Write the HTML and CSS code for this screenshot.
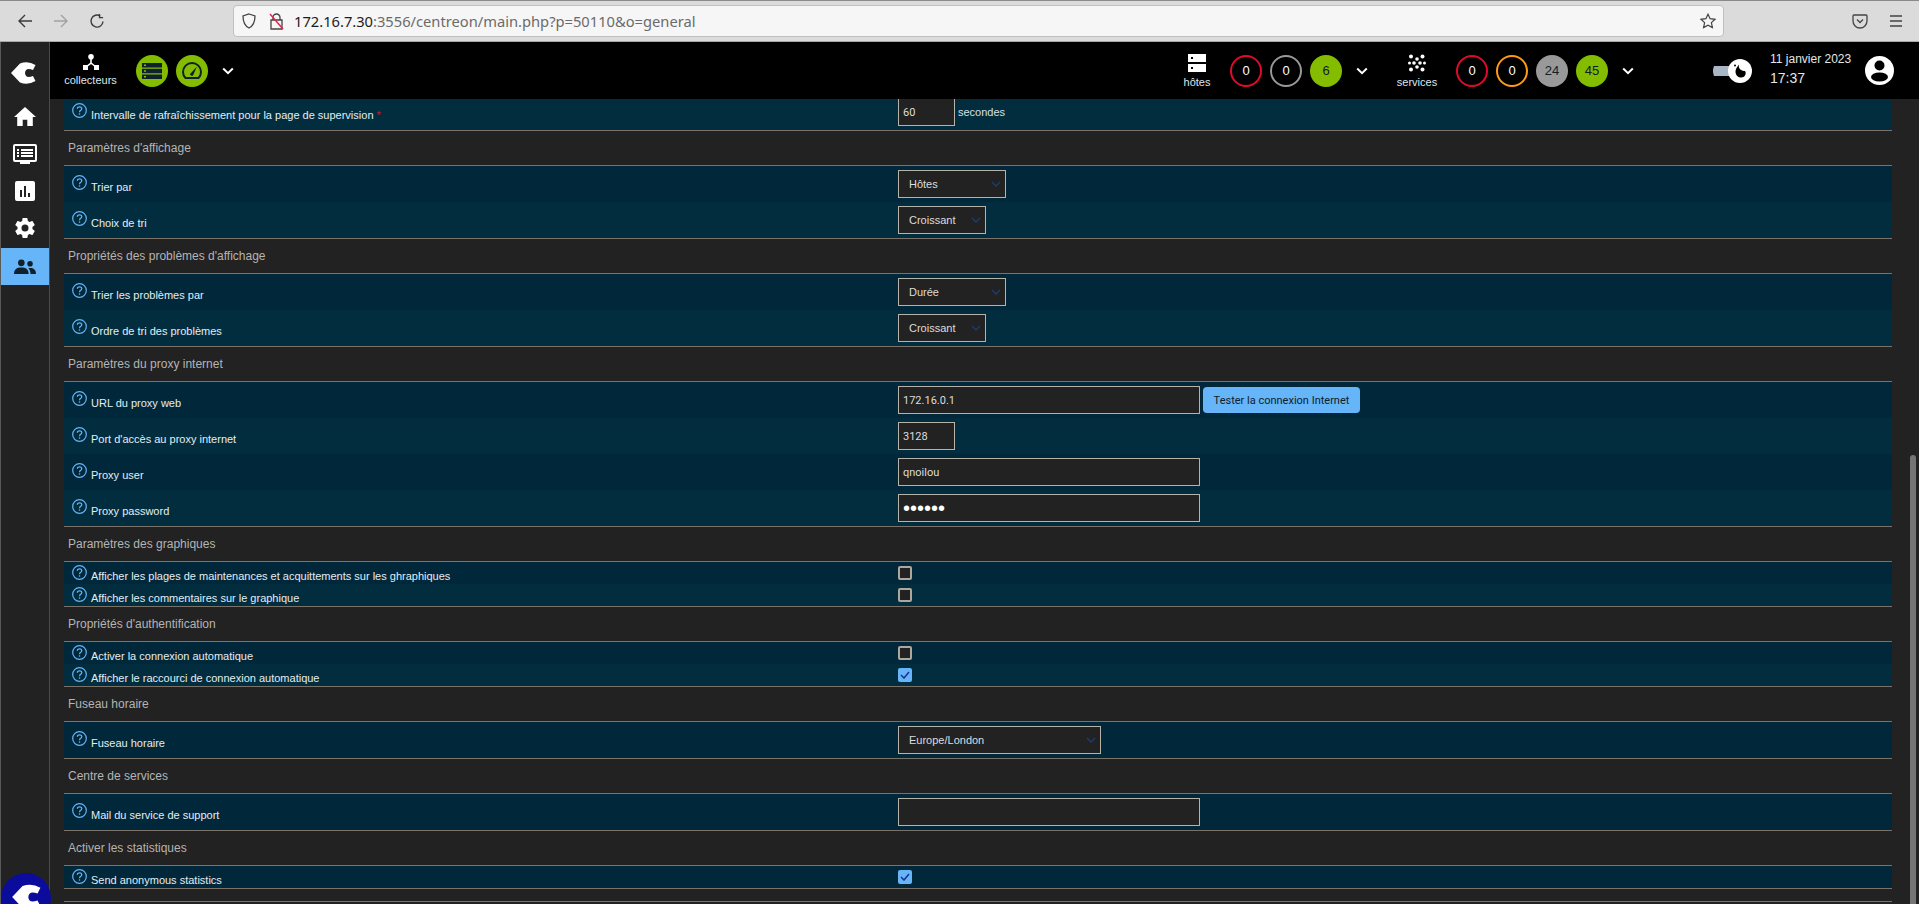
FILE: index.html
```html
<!DOCTYPE html>
<html lang="fr">
<head>
<meta charset="utf-8">
<title>Centreon</title>
<link rel="stylesheet" href="styles.css">
</head>
<body>
<svg class="defs" width="0" height="0" aria-hidden="true">
  <symbol id="logo" viewBox="0 0 26 24"><path d="M1 12 L10 2.500 Q18 -0.500 25.500 4 L23 9 Q15.500 6 15 12 Q15.500 18 23 15 L25.500 20 Q18 24.500 10 21.500 Z"/></symbol>
  <symbol id="help" viewBox="0 0 15 15"><circle cx="7.5" cy="7.5" r="6.8" fill="none" stroke="#66b5f8" stroke-width="1.2"/><path d="M5.3 5.8 C5.3 3.2 9.8 3.2 9.8 5.8 C9.8 7.4 7.5 7.2 7.5 9.2" fill="none" stroke="#66b5f8" stroke-width="1.2"/><circle cx="7.5" cy="11" r=".8" fill="#66b5f8"/></symbol>
  <symbol id="chev" viewBox="0 0 12 8"><path d="M1.2 1.5 L6 6.2 L10.8 1.5" fill="none" stroke="#fff" stroke-width="2"/></symbol>
</svg>
<div class="browser">
  <svg class="tool first" width="16" height="16" viewBox="0 0 16 16"><path d="M15 8H2M8 2L2 8l6 6" fill="none" stroke="#3b3b3b" stroke-width="1.4"/></svg>
  <svg class="tool" width="16" height="16" viewBox="0 0 16 16"><path d="M1 8h13M8 2l6 6-6 6" fill="none" stroke="#a2a2a2" stroke-width="1.4"/></svg>
  <svg class="tool" width="16" height="16" viewBox="0 0 16 16"><path d="M14 8.5A6 6 0 1 1 11.5 3.2M10.5 1v3.6h3.6" fill="none" stroke="#3b3b3b" stroke-width="1.4"/></svg>
  <div class="urlbar">
    <svg width="14" height="16" viewBox="0 0 14 16"><path d="M7 1 L13 3 C13 9 11 13 7 15 C3 13 1 9 1 3 Z" fill="none" stroke="#444" stroke-width="1.3"/></svg>
    <svg class="lock" width="15" height="17" viewBox="0 0 15 17"><path d="M4 7V4.5a3.5 3.5 0 0 1 7 0V7M2 7h11v9H2z" fill="none" stroke="#444" stroke-width="1.3"/><path d="M1 1l13 15" stroke="#e22850" stroke-width="1.5"/></svg>
    <span class="url"><b>172.16.7.30</b>:3556/centreon/main.php?p=50110&amp;o=general</span>
    <svg class="star" width="16" height="16" viewBox="0 0 16 16"><path d="M8 1.2l2.1 4.5 4.9.6-3.6 3.3 1 4.9L8 12.1l-4.4 2.4 1-4.9L1 6.3l4.9-.6z" fill="none" stroke="#444" stroke-width="1.2"/></svg>
  </div>
  <svg class="pocket" width="16" height="16" viewBox="0 0 16 16"><path d="M2 2h12a1 1 0 0 1 1 1v5a7 7 0 0 1-14 0V3a1 1 0 0 1 1-1z" fill="none" stroke="#444" stroke-width="1.3"/><path d="M5 6.5l3 3 3-3" fill="none" stroke="#444" stroke-width="1.3"/></svg>
  <svg class="burger" width="14" height="14" viewBox="0 0 14 14"><path d="M1 2h12M1 7h12M1 12h12" stroke="#444" stroke-width="1.4"/></svg>
</div>
<div class="app">
  <nav class="sidebar">
    <svg class="side-logo" width="26" height="24"><use href="#logo" fill="#fff"/></svg>
    <a class="side-item"><svg width="22" height="19" viewBox="0 0 24 20" preserveAspectRatio="none"><path d="M12 0 L24 10.5 H20.5 V20 H14.5 V13.5 H9.5 V20 H3.5 V10.5 H0 Z" fill="#fff"/></svg></a>
    <a class="side-item"><svg width="24" height="20" viewBox="0 0 24 20"><path fill="#fff" fill-rule="evenodd" d="M2 0h20a2 2 0 0 1 2 2v14a2 2 0 0 1-2 2h-5v2H7v-2H2a2 2 0 0 1-2-2V2a2 2 0 0 1 2-2zm0 2v14h20V2zM4 5h2v2H4zm4 0h12v2H8zM4 8h2v2H4zm4 0h12v2H8zM4 11h2v2H4zm4 0h12v2H8z"/></svg></a>
    <a class="side-item"><svg width="20" height="20" viewBox="0 0 20 20"><path fill="#fff" fill-rule="evenodd" d="M2 0h16a2 2 0 0 1 2 2v16a2 2 0 0 1-2 2H2a2 2 0 0 1-2-2V2a2 2 0 0 1 2-2zm3 9v7h2V9zm4-4v11h2V5zm4 7v4h2v-4z"/></svg></a>
    <a class="side-item"><svg width="24" height="24" viewBox="0 0 24 24"><path fill="#fff" d="M19.4 13c.04-.33.1-.66.1-1s-.06-.67-.1-1l2.1-1.65c.2-.15.25-.42.13-.64l-2-3.46c-.12-.22-.39-.3-.61-.22l-2.49 1c-.52-.4-1.08-.73-1.69-.98l-.38-2.65A.49.49 0 0 0 14 2h-4c-.25 0-.46.18-.49.42l-.38 2.65c-.61.25-1.17.59-1.69.98l-2.49-1c-.23-.09-.49 0-.61.22l-2 3.46c-.13.22-.07.49.12.64L4.56 11c-.04.33-.06.66-.06 1s.02.67.06 1l-2.1 1.65c-.2.15-.25.42-.13.64l2 3.46c.12.22.39.3.61.22l2.49-1c.52.4 1.08.73 1.69.98l.38 2.65c.03.24.24.42.49.42h4c.25 0 .46-.18.49-.42l.38-2.65c.61-.25 1.17-.59 1.69-.98l2.49 1c.23.09.49 0 .61-.22l2-3.46c.12-.22.07-.49-.12-.64zM12 15.5a3.5 3.5 0 1 1 0-7 3.5 3.5 0 0 1 0 7z"/></svg></a>
    <a class="side-item active"><svg width="22" height="15" viewBox="0 0 24 16" preserveAspectRatio="none"><g fill="#10202c"><circle cx="8" cy="4" r="3.6"/><circle cx="17.5" cy="5" r="3"/><path d="M0 16c0-5 3-7 8-7s8 2 8 7zM17.5 9.5c4 0 6.500 2 6.500 6.500h-6c0-3-1-5-2.500-6.200z"/></g></svg></a>
  </nav>
  <div class="main">
    <header class="topbar">
      <div class="block block-coll">
        <svg width="16" height="16" viewBox="0 0 16 16"><g fill="#fff"><circle cx="8" cy="2.800" r="2.800"/><rect x="0" y="11" width="5" height="5"/><rect x="11" y="11" width="5" height="5"/></g><path d="M8 4V9L3 13M8 9l5 4" fill="none" stroke="#fff" stroke-width="1.600"/></svg>
        <span>collecteurs</span>
      </div>
      <span class="round green first-round"><svg width="20" height="16" viewBox="0 0 20 16"><path fill="#10202c" fill-rule="evenodd" d="M0 0h20v4.600H0zM2 1.600v1.400h2V1.600zM0 5.700h20v4.600H0zM2 7.300v1.400h2V7.300zM0 11.400h20V16H0zM2 13v1.400h2V13z"/></svg></span>
      <span class="round green"><svg width="20" height="17" viewBox="0 0 20 17"><path d="M3.500 16H16.500C18 14.500 19 12.500 19 10A9 9 0 0 0 1 10C1 12.500 2 14.500 3.500 16Z" fill="none" stroke="#10202c" stroke-width="2"/><path d="M8 12 L15 4.500 L11 13.500 A2 2 0 0 1 8 12Z" fill="#10202c"/></svg></span>
      <svg class="chev" width="12" height="8"><use href="#chev"/></svg>
      <div class="block block-hosts">
        <svg width="18" height="18" viewBox="0 0 18 18"><path fill="#fff" fill-rule="evenodd" d="M0 0h18v8H0zM3 3v2h2V3zM0 10h18v8H0zM3 13v2h2v-2z"/></svg>
        <span>hôtes</span>
      </div>
      <span class="round red">0</span>
      <span class="round grey">0</span>
      <span class="round green">6</span>
      <svg class="chev" width="12" height="8"><use href="#chev"/></svg>
      <div class="block block-serv">
        <svg width="18" height="18" viewBox="0 0 18 18"><g fill="#fff"><circle cx="3" cy="2.500" r="2"/><circle cx="14.500" cy="2.500" r="2"/><circle cx="9" cy="5" r="1.800"/><circle cx="1.500" cy="9" r="1.500"/><circle cx="6" cy="9" r="1.800"/><circle cx="12" cy="9" r="1.800"/><circle cx="16.500" cy="9" r="1.500"/><circle cx="9" cy="13" r="1.800"/><circle cx="3" cy="15.500" r="2"/><circle cx="14.500" cy="15.500" r="2"/></g></svg>
        <span>services</span>
      </div>
      <span class="round red">0</span>
      <span class="round orange">0</span>
      <span class="round solidgrey">24</span>
      <span class="round green">45</span>
      <svg class="chev" width="12" height="8"><use href="#chev"/></svg>
      <div class="toggle"><span class="knob"><svg width="24" height="24" viewBox="0 0 24 24"><circle cx="12" cy="12" r="12" fill="#fff"/><path d="M11 5.500 C10 9.500 13 12 17 12 C19 15 16.500 19 12.500 18.500 C8.500 18 6 13.500 8.500 9 Z" fill="#000"/><circle cx="7" cy="6.500" r="1" fill="#000"/></svg></span></div>
      <div class="clock"><span class="date">11 janvier 2023</span><span class="time">17:37</span></div>
      <svg class="user" width="29" height="29" viewBox="0 0 29 29"><circle cx="14.500" cy="14.500" r="14.500" fill="#fff"/><circle cx="14.500" cy="9.500" r="5" fill="#000"/><ellipse cx="14.500" cy="21" rx="8.500" ry="4.500" fill="#000"/></svg>
    </header>
    <div class="viewport">
      <form class="form">
        <div class="row alt last"><div class="lab"><svg class="help"><use href="#help"/></svg><span>Intervalle de rafraîchissement pour la page de supervision <i>*</i></span></div><div class="val"><input class="in-s" value="60"><span class="unit">secondes</span></div></div>
        <div class="title">Paramètres d'affichage</div>
        <div class="row"><div class="lab"><svg class="help"><use href="#help"/></svg><span>Trier par</span></div><div class="val"><select class="sel-m"><option>Hôtes</option></select></div></div>
        <div class="row alt last"><div class="lab"><svg class="help"><use href="#help"/></svg><span>Choix de tri</span></div><div class="val"><select class="sel-s"><option>Croissant</option></select></div></div>
        <div class="title">Propriétés des problèmes d'affichage</div>
        <div class="row"><div class="lab"><svg class="help"><use href="#help"/></svg><span>Trier les problèmes par</span></div><div class="val"><select class="sel-m"><option>Durée</option></select></div></div>
        <div class="row alt last"><div class="lab"><svg class="help"><use href="#help"/></svg><span>Ordre de tri des problèmes</span></div><div class="val"><select class="sel-s"><option>Croissant</option></select></div></div>
        <div class="title">Paramètres du proxy internet</div>
        <div class="row"><div class="lab"><svg class="help"><use href="#help"/></svg><span>URL du proxy web</span></div><div class="val"><input class="in-l" value="172.16.0.1"><button type="button" class="btn">Tester la connexion Internet</button></div></div>
        <div class="row alt"><div class="lab"><svg class="help"><use href="#help"/></svg><span>Port d'accès au proxy internet</span></div><div class="val"><input class="in-s" value="3128"></div></div>
        <div class="row"><div class="lab"><svg class="help"><use href="#help"/></svg><span>Proxy user</span></div><div class="val"><input class="in-l" value="qnoilou"></div></div>
        <div class="row alt last"><div class="lab"><svg class="help"><use href="#help"/></svg><span>Proxy password</span></div><div class="val"><input class="in-l pw" type="password" value="secret"></div></div>
        <div class="title">Paramètres des graphiques</div>
        <div class="row slim"><div class="lab"><svg class="help"><use href="#help"/></svg><span>Afficher les plages de maintenances et acquittements sur les ghraphiques</span></div><div class="val"><span class="check"></span></div></div>
        <div class="row slim alt last"><div class="lab"><svg class="help"><use href="#help"/></svg><span>Afficher les commentaires sur le graphique</span></div><div class="val"><span class="check"></span></div></div>
        <div class="title">Propriétés d'authentification</div>
        <div class="row slim"><div class="lab"><svg class="help"><use href="#help"/></svg><span>Activer la connexion automatique</span></div><div class="val"><span class="check"></span></div></div>
        <div class="row slim alt last"><div class="lab"><svg class="help"><use href="#help"/></svg><span>Afficher le raccourci de connexion automatique</span></div><div class="val"><span class="check on"><svg width="10" height="8" viewBox="0 0 10 8"><path d="M1 4l3 3 5-6" fill="none" stroke="#1c2f8f" stroke-width="1.500"/></svg></span></div></div>
        <div class="title">Fuseau horaire</div>
        <div class="row last"><div class="lab"><svg class="help"><use href="#help"/></svg><span>Fuseau horaire</span></div><div class="val"><select class="sel-l"><option>Europe/London</option></select></div></div>
        <div class="title">Centre de services</div>
        <div class="row last"><div class="lab"><svg class="help"><use href="#help"/></svg><span>Mail du service de support</span></div><div class="val"><input class="in-l" value=""></div></div>
        <div class="title">Activer les statistiques</div>
        <div class="row slim last"><div class="lab"><svg class="help"><use href="#help"/></svg><span>Send anonymous statistics</span></div><div class="val"><span class="check on"><svg width="10" height="8" viewBox="0 0 10 8"><path d="M1 4l3 3 5-6" fill="none" stroke="#1c2f8f" stroke-width="1.500"/></svg></span></div></div>
        <div class="foot"></div>
      </form>
      <div class="scrollbar"></div>
    </div>
  </div>
  <div class="fab"><svg width="30" height="28"><use href="#logo" fill="#fff"/></svg></div>
</div>
</body>
</html>
```
FILE: styles.css
```css
* { box-sizing: border-box; }
html, body { margin: 0; height: 904px; overflow: hidden; background: #222; }
body { font-family: "Liberation Sans", Arial, sans-serif; }
.defs { position: absolute; }

.browser { height: 42px; display: flex; align-items: center; background: #dbdbdb; border-top: 1px solid #8a8a8a; border-bottom: 1px solid #a8a8a8; }
.tool { margin-right: 20px; flex: none; }
.tool.first { margin-left: 17px; }
.urlbar { width: 1491px; height: 32px; flex: none; margin-left: 108px; padding-left: 8px; display: flex; align-items: center; background: #f6f6f6; border: 1px solid #c0c0c0; border-radius: 4px; }
.lock { margin-left: 13px; }
.url { margin-left: 10px; font-family: "Noto Sans", sans-serif; font-size: 14.700px; color: #6b6b6b; white-space: nowrap; }
.url b { font-weight: 400; color: #1c1c1c; }
.star { margin-left: auto; margin-right: 7px; }
.pocket { margin-left: 128px; }
.burger { margin-left: 21px; }

.app { position: relative; display: flex; height: 862px; }
.sidebar { width: 50px; flex: none; display: flex; flex-direction: column; align-items: center; background: #222; border-left: 1px solid #5a5a5a; border-right: 1px solid #4a4a4a; }
.side-logo { margin: 19px 0 13px -5px; flex: none; }
.side-item { height: 37px; width: 48px; flex: none; display: flex; align-items: center; justify-content: center; }
.side-item.active { background: #66b5f8; margin-top: 2px; }

.main { flex: 1; min-width: 0; display: flex; flex-direction: column; }
.topbar { height: 57px; flex: none; display: flex; align-items: center; background: #000; padding-left: 15px; color: #eee; position: relative; z-index: 2; }
.block { display: flex; flex-direction: column; align-items: center; flex: none; height: 40px; font-size: 11px; color: #dfe6ee; gap: 4px; }
.block span { line-height: 13px; white-space: nowrap; }
.block svg { margin-top: 3px; }
.block-coll { width: 51px; margin-right: 20px; }
.block-hosts { width: 30px; margin-right: 18px; margin-left: auto; }
.block-serv { width: 40px; margin-left: 29px; margin-right: 19px; }
.round { width: 32px; height: 32px; flex: none; margin-right: 8px; border-radius: 50%; display: flex; align-items: center; justify-content: center; font-size: 13px; color: #fff; }
.round.green { background: #84bd00; color: #10202c; }
.round.red { border: 2px solid #e00b2b; }
.round.grey { border: 2px solid #999; }
.round.orange { border: 2px solid #ff9a13; }
.round.solidgrey { background: #999; color: #10202c; }
.chev { flex: none; margin-left: 6px; }
.toggle { width: 39px; height: 24px; flex: none; margin-left: 79px; display: flex; align-items: center; justify-content: flex-end; background: linear-gradient(#a9b6c5, #a9b6c5) left center / 24px 10px no-repeat; border-radius: 12px; }
.knob { display: block; width: 24px; height: 24px; }
.knob svg { display: block; }
.clock { margin: 0 0 3px 18px; width: 83px; flex: none; display: flex; flex-direction: column; color: #e6e6e6; }
.date { font-size: 12px; line-height: 14px; white-space: nowrap; }
.time { font-size: 14px; line-height: 17px; margin-top: 4px; }
.user { margin-left: 12px; margin-right: 25px; flex: none; }

.viewport { flex: 1; min-height: 0; overflow: hidden; position: relative; background: #222; }
.form { width: 1828px; margin: -5px 0 0 14px; }
.row { display: grid; grid-template-columns: 834px 1fr; height: 36px; background: #00283a; }
.row.alt { background: #022d3f; }
.row.last { height: 37px; border-bottom: 1px solid #7b736a; }
.row.slim { height: 22px; }
.row.slim.last { height: 23px; }
.lab { display: flex; align-items: flex-start; padding: 9px 0 0 8px; font-size: 11px; line-height: 13px; color: #e4edf2; }
.lab span { margin: 6px 0 0 4px; white-space: nowrap; }
.lab i { color: #d8112b; font-style: normal; font-size: 11px; }
.slim .lab { padding-top: 3px; }
.slim .lab span { margin-top: 5px; }
.help { width: 15px; height: 15px; flex: none; }
.val { display: flex; align-items: flex-start; padding-top: 4px; }
.title { height: 35px; padding-left: 4px; font-size: 12px; line-height: 34px; color: #b4b4b4; background: #222; border-bottom: 1px solid #7b736a; }
.foot { height: 13px; border-bottom: 1px solid #7b736a; }

input, select { display: block; height: 28px; margin: 0; background-color: #222; border: 1px solid #b7b3a9; border-radius: 0; color: #ddd; outline: none; }
input { padding: 0 4px; font-family: Roboto, sans-serif; font-size: 11px; }
input.pw { padding-left: 4px; font-family: "Liberation Sans", sans-serif; font-size: 20px; color: #fff; }
select { appearance: none; -webkit-appearance: none; padding: 0 0 0 10px; font-family: "Liberation Sans", sans-serif; font-size: 11px; background-repeat: no-repeat; background-position: right 4px center; background-image: url("data:image/svg+xml,%3Csvg xmlns='http://www.w3.org/2000/svg' width='10' height='6'%3E%3Cpath d='M1 1l4 4 4-4' fill='none' stroke='%231d3d70' stroke-width='1.300'/%3E%3C/svg%3E"); }
.in-s { width: 57px; }
.in-l { width: 302px; }
.sel-m { width: 108px; }
.sel-s { width: 88px; }
.sel-l { width: 203px; }
.unit { margin: 8px 0 0 3px; font-size: 11px; line-height: 13px; color: #d6e0e6; }
.btn { width: 157px; height: 26px; margin: 1px 0 0 3px; padding: 0; background: #66b5f8; border: 0; border-radius: 4px; color: #10202c; font-family: Roboto, sans-serif; font-size: 11px; }
.check { display: flex; width: 14px; height: 14px; align-items: center; justify-content: center; background: #222; border: 2px solid #aca89e; border-radius: 2px; }
.check.on { background: #66b5f8; border-color: #66b5f8; }

.scrollbar { position: absolute; right: 3px; top: 356px; bottom: 0; width: 6px; background: #757575; border-radius: 3px 3px 0 0; }
.fab { position: absolute; left: 1px; top: 831px; width: 50px; height: 50px; display: flex; justify-content: center; padding-top: 10px; background: #0c0c9c; border-radius: 50%; z-index: 3; }
```
